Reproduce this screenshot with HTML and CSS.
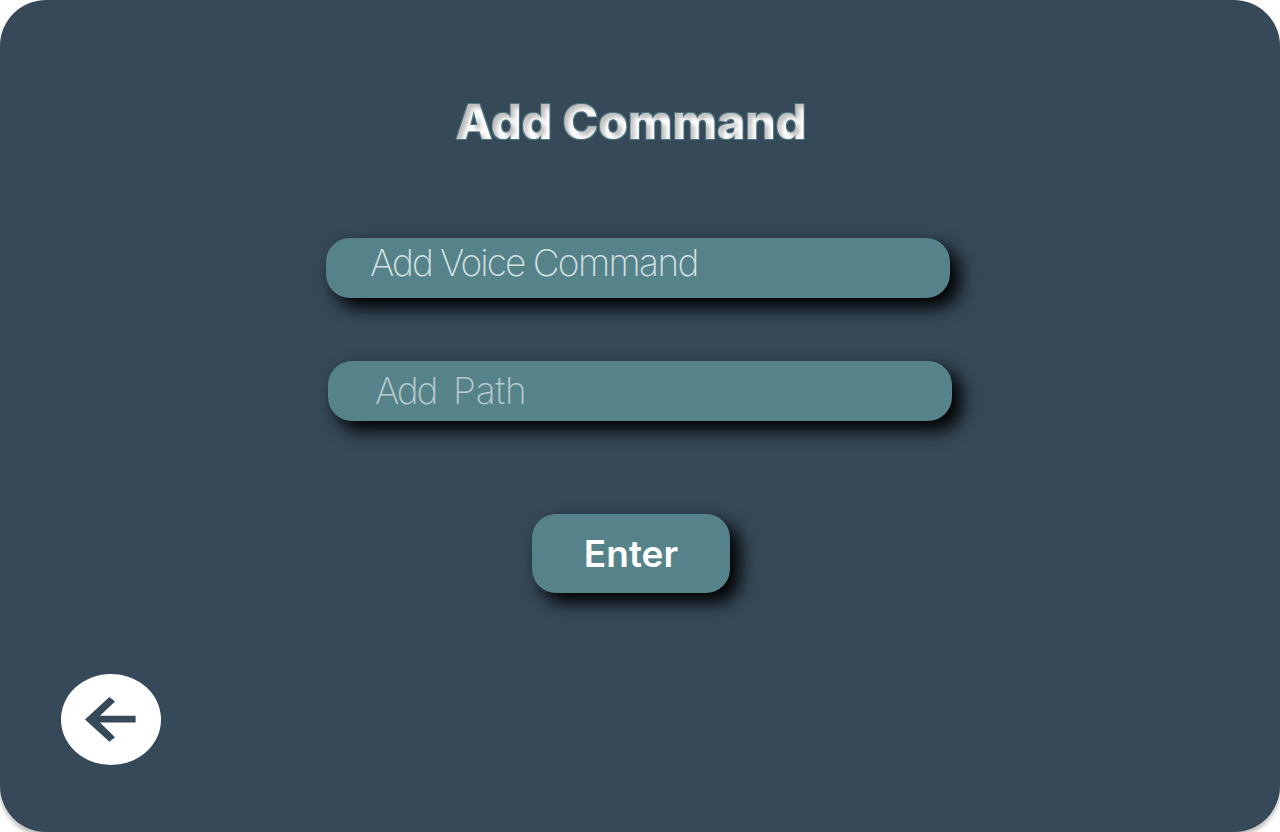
FILE: index.html
```html
<!DOCTYPE html>
<html lang="en">
<head>
<meta charset="utf-8">
<title>Add Command</title>
<link rel="stylesheet" href="styles.css">
</head>
<body>
<svg class="defs" width="0" height="0" aria-hidden="true">
  <filter id="bevel" x="-5%" y="-20%" width="110%" height="140%" color-interpolation-filters="sRGB">
    <feMorphology in="SourceAlpha" operator="dilate" radius="0.5" result="fat"/>
    <feFlood flood-color="#56838a" flood-opacity="0.8"/>
    <feComposite in2="fat" operator="in" result="edge"/>
    <feOffset in="SourceAlpha" dx="4" dy="4"/>
    <feGaussianBlur stdDeviation="2" result="moved"/>
    <feFlood flood-color="#000" flood-opacity="0.25"/>
    <feComposite in2="moved" operator="out"/>
    <feComposite in2="SourceAlpha" operator="in" result="inner"/>
    <feMerge><feMergeNode in="edge"/><feMergeNode in="SourceGraphic"/><feMergeNode in="inner"/></feMerge>
  </filter>
</svg>
<main class="screen">
  <h1 class="title">Add Command</h1>
  <form class="form">
    <label class="field field-voice"><span class="hint-voice">Add Voice <span class="word-command">Command</span></span></label>
    <label class="field field-path"><span class="hint-path">Add&nbsp; <span class="word-path">Path</span></span></label>
    <button class="enter" type="button">Enter</button>
  </form>
  <a class="back" aria-label="Back">
    <svg class="arrow" viewBox="0 0 100 91"><path d="M24 45.4 48.4 23 54 27.4 39 41.8H74.6V48.6H39L54 63.2 48.4 67.8Z"/></svg>
  </a>
</main>
</body>
</html>
```
FILE: styles.css
```css
body {
  margin: 0;
  background: #fff;
  overflow: hidden;
  font-family: Inter, "Liberation Sans", sans-serif;
}
.defs { display: block; }
.screen {
  display: flex;
  flex-direction: column;
  box-sizing: border-box;
  height: 832px;
  padding-top: 93px;
  border-radius: 46px;
  background: #364958;
  box-shadow: 0 4px 4px rgba(0, 0, 0, 0.25);
}
.title {
  margin: 0 0 0 455.5px;
  width: 360px;
  height: 58px;
  line-height: 58px;
  font-size: 48px;
  font-weight: 800;
  letter-spacing: 0;
  color: #fff;
  white-space: nowrap;
  filter: url(#bevel);
}
.form {
  display: flex;
  flex-direction: column;
  align-items: flex-start;
  margin-top: 87px;
}
.field, .enter {
  box-sizing: border-box;
  border: 0;
  border-radius: 24px;
  background: #56838a;
  box-shadow: 9px 9px 18px 1px #000;
}
.field {
  display: flex;
  width: 624px;
  height: 60px;
  font-size: 37px;
  font-weight: 200;
  line-height: 44px;
  white-space: nowrap;
}
.field-voice { margin-left: 326px; padding: 3px 0 0 44px; }
.field-path { margin: 63px 0 0 328px; padding: 8px 0 0 47px; }
.hint-voice { color: #d4e0e2; letter-spacing: -1.9px; word-spacing: -0.4px; }
.word-command { letter-spacing: -1.6px; }
.hint-path { color: #b9cccf; letter-spacing: -2.1px; }
.word-path { letter-spacing: -0.2px; }
.enter {
  display: flex;
  justify-content: center;
  width: 198px;
  height: 79px;
  margin: 93px 0 0 532px;
  padding: 18px 0 0;
  font: 600 37px/44px Inter, "Liberation Sans", sans-serif;
  color: #fff;
}
.back {
  width: 100px;
  height: 90.5px;
  margin: 81px 0 0 61px;
  border-radius: 50%;
  background: #fff;
}
.arrow { display: block; width: 100px; height: 91px; fill: #364958; }
```
